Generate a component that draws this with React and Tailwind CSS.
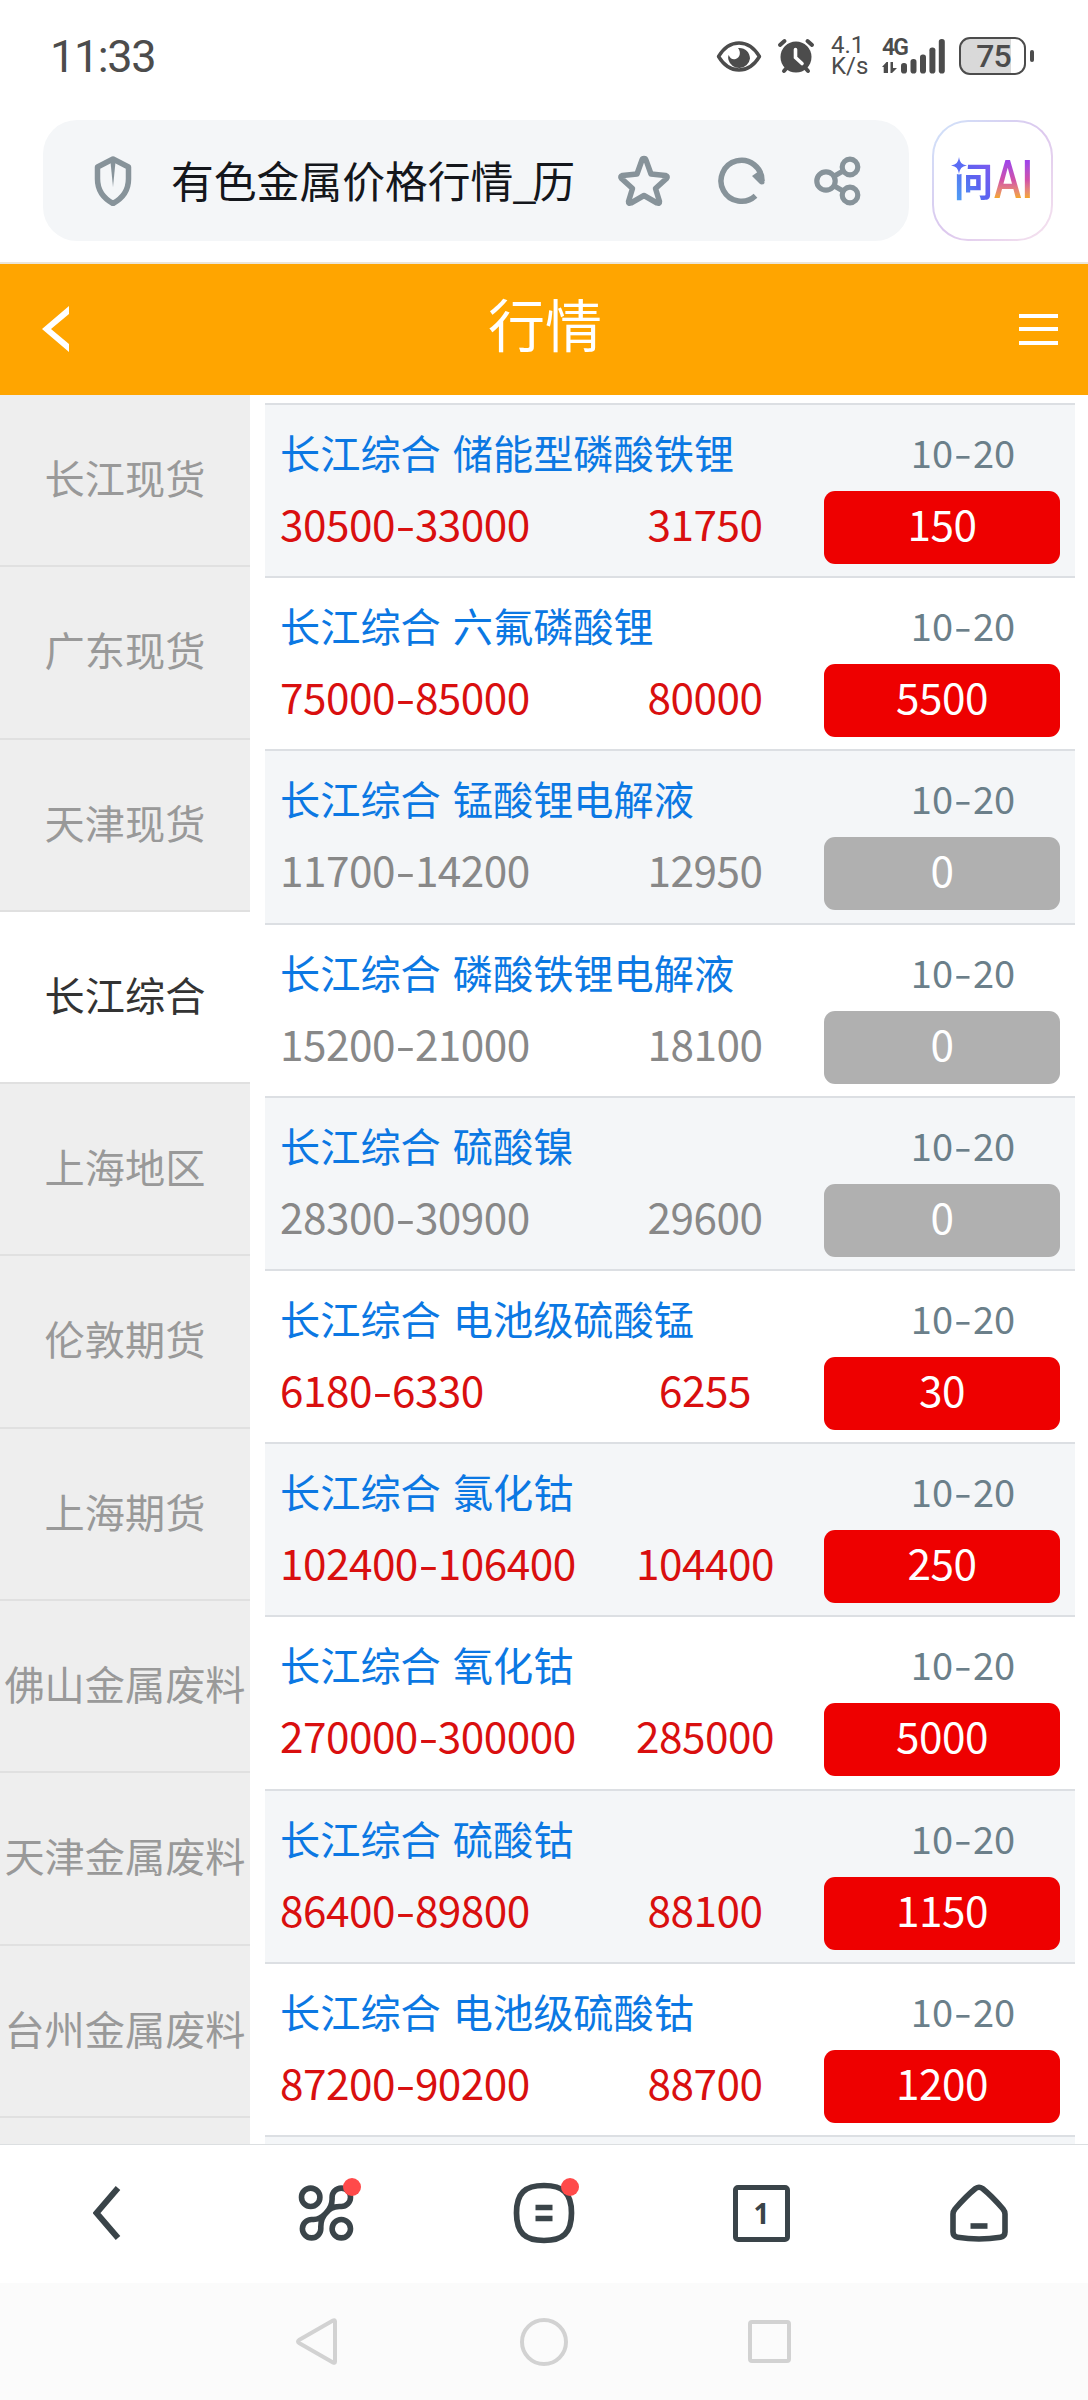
const categories = [
  '长江现货',
  '广东现货',
  '天津现货',
  '长江综合',
  '上海地区',
  '伦敦期货',
  '上海期货',
  '佛山金属废料',
  '天津金属废料',
  '台州金属废料',
];

const quotes = [
  { name: '储能型磷酸铁锂', range: '30500-33000', price: '31750', change: 150 },
  { name: '六氟磷酸锂', range: '75000-85000', price: '80000', change: 5500 },
  { name: '锰酸锂电解液', range: '11700-14200', price: '12950', change: 0 },
  { name: '磷酸铁锂电解液', range: '15200-21000', price: '18100', change: 0 },
  { name: '硫酸镍', range: '28300-30900', price: '29600', change: 0 },
  { name: '电池级硫酸锰', range: '6180-6330', price: '6255', change: 30 },
  { name: '氯化钴', range: '102400-106400', price: '104400', change: 250 },
  { name: '氧化钴', range: '270000-300000', price: '285000', change: 5000 },
  { name: '硫酸钴', range: '86400-89800', price: '88100', change: 1150 },
  { name: '电池级硫酸钴', range: '87200-90200', price: '88700', change: 1200 },
];

const StatusBar = () => (
  <div className="flex h-[120px] shrink-0 pl-[50px] text-[#4c4c4c] font-['Roboto',sans-serif]">
    <div className="mt-[30px] h-[54px] text-[45px] leading-[54px] font-[450] tracking-[-1.4px]">11:33</div>
    <div className="ml-auto mr-[54px] flex h-[112px] items-center">
      <svg width="46" height="33" viewBox="0 0 46 33" fill="none" className="mr-[15px]">
        <path d="M2.5 16.5C8 7.500 15 3 23 3s15 4.500 20.500 13.500C38 25.500 31 30 23 30S8 25.500 2.500 16.500z" stroke="currentColor" strokeWidth="3.400" strokeLinejoin="round" />
        <path d="M22 8c6.500-.800 12 4 12 10.500A11 11 0 0 1 12.500 20c-.5-2-.5-3.500.2-5 1.300 3.500 4 5 7 4 4.500-1.500 5.500-7 2.300-11z" fill="currentColor" />
      </svg>
      <svg width="38" height="36" viewBox="0 0 38 36" fill="none" stroke="currentColor" strokeLinecap="round" className="mr-[16px]">
        <circle cx="19" cy="19" r="15.500" fill="currentColor" stroke="none" />
        <path d="M3 7l4.500-4M35 7l-4.500-4M7 33l3-3.500M31 33l-3-3.500" strokeWidth="4" />
        <path d="M18.500 11.500v8l6.500 6" stroke="#fff" strokeWidth="3.600" />
      </svg>
      <div className="mr-[15px] w-[36px] text-[24px] leading-[21px] font-[450]">
        <div>4.1</div>
        <div>K/s</div>
      </div>
      <div className="h-[36px] w-[64px]">
        <div className="h-[19px] text-[23px] leading-[19px] font-semibold tracking-[-2px]">4G</div>
        <svg width="64" height="36" viewBox="0 0 64 36" fill="currentColor" className="-mt-[19px]">
          <path d="M4.500 24v11h-2.800v-6H0zM4.500 24H6v11H4.500zM8.500 24H11v6h4l-5 5H8.500z" />
          <rect x="19" y="25" width="6" height="10.500" rx="2.800" />
          <rect x="28.500" y="21" width="6" height="14.500" rx="2.800" />
          <rect x="38" y="16.500" width="6" height="19" rx="2.800" />
          <rect x="47.400" y="9.500" width="6" height="26" rx="2.800" />
          <rect x="56.800" y="1" width="6" height="34.500" rx="2.800" />
        </svg>
      </div>
      <div className="ml-[13px] flex h-[38px] w-[67px] justify-center rounded-[11px] border-[2.500px] border-[#4c4c4c] bg-linear-to-r from-[#d9d9d9] from-80% to-white to-80% pl-[2px] text-[32px] leading-[34px] font-medium tracking-[-1px]">
        75
      </div>
      <div className="ml-[4px] h-[12px] w-[4px] rounded-full bg-[#4c4c4c]" />
    </div>
  </div>
);

const AskAiButton = () => (
  <div className="h-[121px] w-[121px] rounded-[36px] bg-linear-to-br from-[#cfe3fa] via-[#dcc8ee] to-[#f7e3ee] p-[2px]">
    <div className="relative flex h-full w-full items-center rounded-[34px] bg-white pb-[2px] pl-[20px]">
      <span className="w-[40px] bg-linear-to-tr from-[#45b0f5] via-[#5a62f0] to-[#8a55f0] bg-clip-text pb-[2px] text-[39px] leading-[58px] font-bold text-transparent">问</span>
      <span className="inline-block origin-left scale-x-[0.78] bg-linear-to-b from-[#a044e8] from-20% via-[#d24fa8] via-50% to-[#f5a623] to-80% bg-clip-text font-['Roboto',sans-serif] text-[53px] leading-[60px] font-medium text-transparent">AI</span>
      <svg width="18" height="19" viewBox="0 0 18 19" className="absolute top-[34px] left-[16px]">
        <circle cx="9" cy="9.500" r="9" fill="#fff" />
        <path d="M9 1c1 5.500 2.500 7.500 8 8.500-5.500 1-7 3-8 8.500-1-5.500-2.500-7.500-8-8.500 5.500-1 7-3 8-8.500z" fill="#5b6cf5" />
      </svg>
    </div>
  </div>
);

const AddressBar = () => (
  <div className="flex h-[142px] shrink-0 pl-[43px]">
    <div className="flex h-[121px] w-[866px] items-center rounded-[34px] bg-[#f4f6f8] pl-[51px] text-[#87939a]">
      <svg width="38" height="50" viewBox="0 0 38 50" fill="none">
        <path d="M19 3l15.500 8v12C34.500 34 29 42 19 47.500 9 42 3.500 34 3.500 23V11z" stroke="currentColor" strokeWidth="5.500" strokeLinejoin="round" />
        <path d="M16.500 6h5L19 31z" fill="currentColor" />
      </svg>
      <div className="ml-[39px] w-[405px] pb-1 text-[42.800px] leading-[64px] whitespace-nowrap text-[#14171c]">
        有色金属价格行情<span className="mr-[-4px] ml-[-1px]">_</span>历
      </div>
      <svg width="54" height="53" viewBox="0 0 54 53" fill="none" stroke="currentColor" strokeWidth="5.500" strokeLinejoin="round" className="ml-[41px]">
        <path d="M27 4.500q1.500 0 2 1.500l5 14 14.500 1.500q2.800.8 1 3L38.500 34.500l4 13q.2 2.500-2.500 1.500L27 41.500 14 49q-2.700 1-2.500-1.500l4-13L4.500 24.500q-1.800-2.200 1-3L20 20l5-14q.5-1.500 2-1.500z" />
      </svg>
      <svg width="50" height="50" viewBox="0 0 50 50" fill="none" stroke="currentColor" className="ml-[46px]">
        <path d="M38.500 39.800A20.500 20.500 0 1 1 45 25" strokeWidth="5.500" />
        <path d="M35 20l7-5c4 3 5.500 8 5.500 12-1.500 2-3.500 2-5 .5z" fill="currentColor" stroke="none" />
      </svg>
      <svg width="48" height="50" viewBox="0 0 48 50" fill="none" stroke="currentColor" strokeWidth="5.200" className="ml-[47px]">
        <circle cx="12" cy="25" r="9.200" />
        <circle cx="36" cy="11" r="7.800" />
        <circle cx="36" cy="39" r="7.800" />
        <path d="M20 20.300l9-5.300M20 29.700l9 5.300" />
      </svg>
    </div>
    <div className="ml-[23px]">
      <AskAiButton />
    </div>
  </div>
);

const PageHeader = () => (
  <div className="flex h-[133px] shrink-0 items-center justify-between border-t-2 border-[#ece6d8] bg-[#ffa500] pr-[30px] pb-px pl-[42px]">
    <svg width="27" height="46" viewBox="0 0 27 46" fill="#fff">
      <path d="M27 0v8L9 23l18 15v8L0 23z" />
    </svg>
    <h1 className="h-[72px] pl-[2px] text-[57px] leading-[58px] text-white">行情</h1>
    <div className="flex flex-col gap-[9.500px]">
      <div className="h-[4px] w-[39px] bg-white" />
      <div className="h-[4px] w-[39px] bg-white" />
      <div className="h-[4px] w-[39px] bg-white" />
    </div>
  </div>
);

const Sidebar = ({ active }) => (
  <div className="w-[250px] shrink-0 bg-[#eee]">
    {categories.map(name => (
      <div
        key={name}
        className={`h-[172.300px] border-b-2 border-[#e0e0e0] pt-[51px] text-center text-[40.200px] leading-[62px] whitespace-nowrap ${
          name === active ? 'bg-white text-[#333]' : 'text-[#999]'
        }`}
      >
        {name}
      </div>
    ))}
  </div>
);

// digits are a bit tighter than the font's own, the dash a bit wider
const Range = ({ value }) => {
  const [low, high] = value.split('-');
  return (
    <>
      {low}
      <span className="inline-block w-[20px] origin-center scale-x-[1.350] text-center">-</span>
      {high}
    </>
  );
};

const QuoteRow = ({ quote, group }) => {
  const flat = quote.change === 0;
  return (
    <div className="h-[173.200px] border-t-2 border-[#dcdfe3] px-[15px] odd:bg-[#f4f6f8]">
      <div className="flex h-[86px] justify-between pt-[22px] leading-[49px]">
        <p className="text-[40.200px] [word-spacing:3px] text-[#0b78e3]">
          {group} {quote.name}
        </p>
        <p className="w-[194px] text-center text-[38px] text-[#6b7f8a]">
          <Range value="10-20" />
        </p>
      </div>
      <div className={`flex h-[73px] text-[42.300px] leading-[64px] tracking-[-0.500px] ${flat ? 'text-[#888]' : 'text-[#d90f0f]'}`}>
        <p className="w-[344px] whitespace-nowrap">
          <Range value={quote.range} />
        </p>
        <p className="w-[162px] text-center">{quote.price}</p>
        <p className={`ml-auto w-[236px] rounded-[11px] text-center text-white ${flat ? 'bg-[#b0b0b0]' : 'bg-[#ee0000]'}`}>
          {quote.change}
        </p>
      </div>
    </div>
  );
};

const BrowserToolbar = () => (
  <div className="grid h-[139px] shrink-0 grid-cols-5 place-items-center border-t border-[#dcdfe1] bg-white pb-[2px] text-[#3a4449]">
    <svg width="28" height="54" viewBox="0 0 28 54" fill="none" stroke="currentColor" strokeWidth="6" className="-ml-[3px]">
      <path d="M25 2L3.500 27 25 52" />
    </svg>
    <div className="relative">
      <svg width="56" height="56" viewBox="0 0 56 56" fill="none" stroke="currentColor" strokeWidth="5.600">
        <circle cx="12.700" cy="12.300" r="9.200" />
        <circle cx="43.300" cy="43.700" r="9.200" />
        <path d="M34.100 12.300a9.200 9.200 0 1 1 9.200 9.200h-2C34 21.500 31 25 28 28s-5.200 6.500-5.200 13.700v2a9.200 9.200 0 1 1-9.200-9.200h2C22 34.500 25 31 28 28s6.100-6.500 6.100-13.700z" />
      </svg>
      <span className="absolute -top-[7px] -right-[7px] h-[18px] w-[18px] rounded-full bg-[#ff4a4a]" />
    </div>
    <div className="relative">
      <svg width="62" height="62" viewBox="0 0 62 62" fill="none" stroke="currentColor" strokeWidth="5.700">
        <path d="M31 3.500C50 3.500 58.500 11 58.500 31S50 58.500 31 58.500 3.500 51 3.500 31 12 3.500 31 3.500z" />
        <path d="M22.500 25.500h17M22.500 36.500h17" />
      </svg>
      <span className="absolute -top-[4px] -right-[4px] h-[18px] w-[18px] rounded-full bg-[#ff4a4a]" />
    </div>
    <div className="flex h-[57px] w-[57px] items-center justify-center rounded-[5px] border-[5.500px] border-current font-['Noto_Sans',sans-serif] text-[28px] leading-[46px] font-bold">
      1
    </div>
    <svg width="58" height="58" viewBox="0 0 58 58" fill="none" stroke="currentColor" strokeWidth="5.600">
      <path d="M25.500 4.500q3.500-2.500 7 0C40 10.500 47 18 53 25q2 2.500 2 5v18q0 4.500-4.500 5.300-21.500 3.400-43 0Q3 52.500 3 48V30q0-2.500 2-5C11 18 18 10.500 25.500 4.500z" />
      <path d="M20.500 42h17" />
    </svg>
  </div>
);

const SystemNav = () => (
  <div className="flex h-[117px] shrink-0 items-center bg-[#fbfbfb] pl-[295px] text-[#d2d2d2]">
    <svg width="43" height="49" viewBox="0 0 43 49" fill="none" stroke="currentColor" strokeWidth="4" strokeLinejoin="round">
      <path d="M38 3.500q2 -1 2 1v40q0 2-2 1L4 26q-2-1.500 0-3z" />
    </svg>
    <div className="ml-[182px] h-[48px] w-[48px] rounded-full border-4 border-current" />
    <div className="ml-[180px] h-[43px] w-[43px] rounded-[4px] border-4 border-current" />
  </div>
);

const App = () => (
  <div className="flex h-[2400px] w-[1088px] flex-col overflow-hidden bg-white font-['Noto_Sans_CJK_SC',sans-serif]">
    <StatusBar />
    <AddressBar />
    <PageHeader />
    <div className="flex min-h-0 flex-1 overflow-hidden">
      <Sidebar active="长江综合" />
      <div className="mt-[8px] mr-[13px] ml-[15px] flex-1">
        {quotes.map(quote => (
          <QuoteRow key={quote.name} quote={quote} group="长江综合" />
        ))}
        <div className="h-[20px] border-t-2 border-[#dcdfe3] bg-[#f4f6f8]" />
      </div>
    </div>
    <BrowserToolbar />
    <SystemNav />
  </div>
);

export default App;
